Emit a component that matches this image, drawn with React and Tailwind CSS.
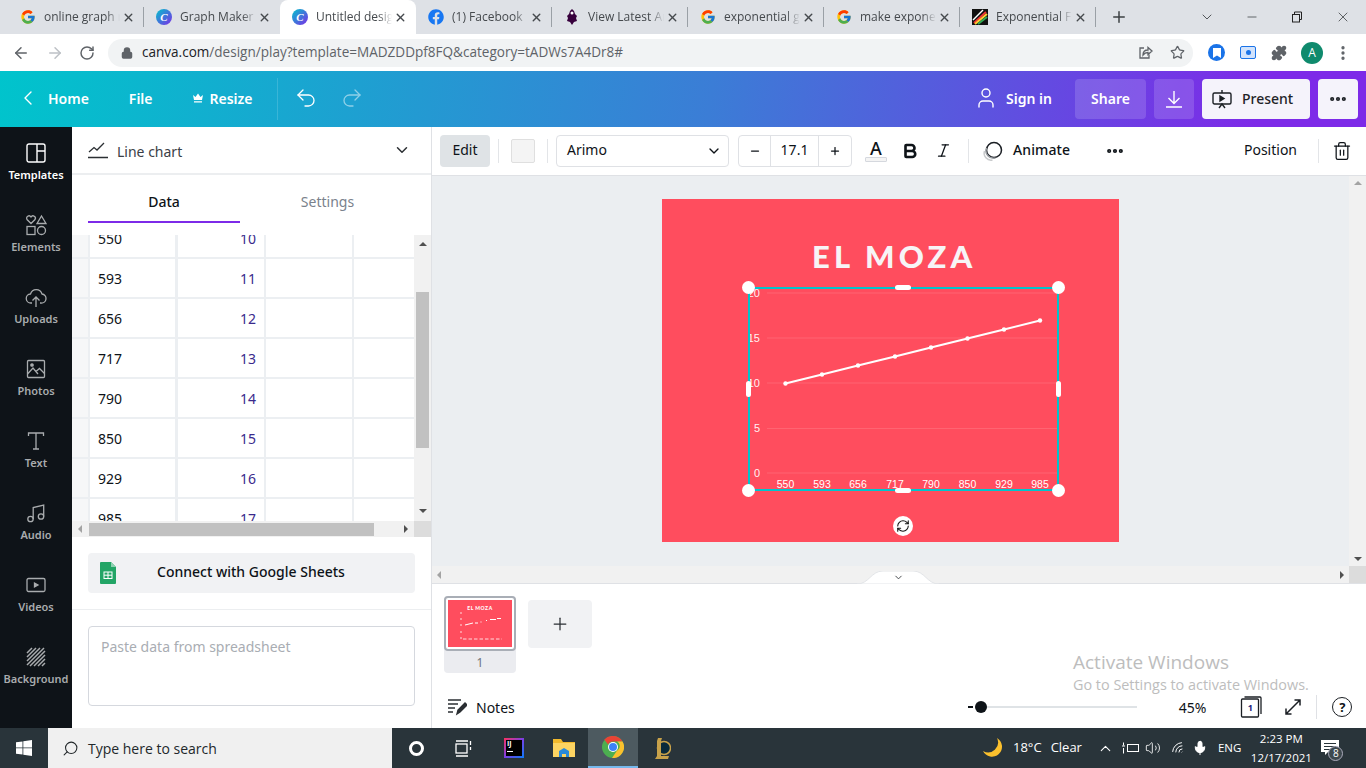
import React from "react";
import { FcGoogle } from "react-icons/fc";
import { FaFacebook } from "react-icons/fa";
import {
  X, Plus, ArrowLeft, ArrowRight, RotateCw, Lock, Star, Puzzle, ChevronDown, ChevronLeft, Minus, Undo2, Redo2,
  User, EllipsisVertical, Ellipsis, Trash2, Bold, Italic, Search, ChevronUp, Mic, Volume2, Wifi, RefreshCw,
} from "lucide-react";

const CanvaIcon = () => (
  <span className="w-4 h-4 rounded-full bg-[linear-gradient(135deg,#00c4cc,#7d2ae8)] flex items-center justify-center text-white text-[11px] italic font-bold leading-none font-['Liberation_Serif',serif]">C</span>
);
const PLIcon = () => (
  <svg width="16" height="16" viewBox="0 0 16 16"><path d="M8 0l2 2 1 3 2 2-1 2 1 3-3 1-2 3-2-3-3-1 1-3-1-2 2-2 1-3z" fill="#37003c" /><circle cx="8" cy="4" r="1.5" fill="#fff" /></svg>
);
const RainbowIcon = () => (
  <svg width="16" height="16" viewBox="0 0 16 16"><rect width="16" height="16" fill="#111" /><path d="M2 14L14 3" stroke="#e33" strokeWidth="2" /><path d="M3 15L15 5" stroke="#fc3" strokeWidth="2" /><path d="M6 15L15 8" stroke="#3a5" strokeWidth="2" /><path d="M1 11L11 1" stroke="#fff" strokeWidth="1.5" /></svg>
);

const tabs = [
  { t: "online graph maker", i: <FcGoogle size={16} /> },
  { t: "Graph Maker - Create", i: <CanvaIcon /> },
  { t: "Untitled design - Line", i: <CanvaIcon />, active: true },
  { t: "(1) Facebook", i: <FaFacebook size={16} className="text-[#1877f2]" /> },
  { t: "View Latest Arsenal", i: <PLIcon /> },
  { t: "exponential graph", i: <FcGoogle size={16} /> },
  { t: "make exponential", i: <FcGoogle size={16} /> },
  { t: "Exponential Function", i: <RainbowIcon /> },
];

function Tab({ t, i, active, sep }) {
  return (
    <div className={`w-[136px] h-[34px] shrink-0 flex items-center pl-[12px] ${active ? "bg-white rounded-t-[8px]" : ""}`}>
      <span className="w-4 h-4 shrink-0 flex items-center justify-center">{i}</span>
      <span className="ml-[8px] w-[76px] overflow-hidden whitespace-nowrap text-[12px] text-[#45494d] [mask-image:linear-gradient(90deg,#000_82%,transparent)]">{t}</span>
      <X size={13} strokeWidth={2.6} className="ml-auto mr-[8px] text-[#45494d]" />
      <span className={`w-px h-[20px] ${sep ? "bg-[#9aa0a6]" : ""}`} />
    </div>
  );
}

function ChromeTop() {
  return (
    <>
      <div className="h-[34px] bg-[#dee1e6] flex items-end pl-[8px] font-['Open_Sans',sans-serif]">
        {tabs.map((x, k) => <Tab key={k} {...x} sep={k !== 1 && k !== 2} />)}
        <Plus size={18} strokeWidth={2} className="ml-[14px] mb-[8px] text-[#3c4043]" />
        <div className="ml-auto self-stretch flex items-center text-[#3c4043]">
          <ChevronDown size={16} strokeWidth={1.3} className="mr-[30px]" />
          <Minus size={14} strokeWidth={1.3} className="mr-[32px]" />
          <svg width="12" height="12" viewBox="0 0 12 12" fill="none" stroke="#222" className="mr-[32px]"><rect x="1.5" y="3.5" width="7" height="7.5" /><path d="M3.5 3.5V1h7v7.5H8.5" /></svg>
          <X size={16} strokeWidth={1.2} className="mr-[15px]" />
        </div>
      </div>
      <div className="h-[37px] bg-white flex items-center pl-[12px] font-['Open_Sans',sans-serif]">
        <ArrowLeft size={18} strokeWidth={2} className="text-[#5f6368]" />
        <ArrowRight size={18} strokeWidth={2} className="ml-[16px] text-[#bdc1c6]" />
        <RotateCw size={16} strokeWidth={2.2} className="ml-[15px] text-[#5f6368]" />
        <div className="ml-[13px] w-[1085px] h-[28px] rounded-full bg-[#f1f3f4] flex items-center pl-[13px] pr-[8px]">
          <Lock size={12} strokeWidth={3} fill="#5f6368" className="text-[#5f6368]" />
          <span className="ml-[9px] text-[13.55px] whitespace-nowrap text-[#5f6368]"><span className="text-[#202124]">canva.com</span>/design/play?template=MADZDDpf8FQ&amp;category=tADWs7A4Dr8#</span>
          <svg width="16" height="16" viewBox="0 0 16 16" fill="none" stroke="#5f6368" strokeWidth="1.3" className="ml-auto"><path d="M7 3H3v10h9V9.5" /><path d="M6 10c0-3.5 2.5-5 5-5V2.500L15 6l-4 3.500V7.500C9 7.500 7.500 8 6 10z" /></svg>
          <Star size={15} strokeWidth={2} className="ml-[17px] text-[#5f6368]" />
        </div>
        <div className="ml-[15px] w-[17px] h-[17px] rounded-full bg-[#1a73e8] flex items-center justify-center">
          <svg width="8" height="10" viewBox="0 0 8 10"><path d="M0 0h8v10L4 7.500 0 10z" fill="#fff" /></svg>
        </div>
        <div className="ml-[15px] w-[16px] h-[13px] rounded-[2px] bg-[#d2e3fc] border border-[#1a73e8] flex items-center justify-center">
          <span className="w-[5px] h-[5px] rounded-full bg-[#1a73e8]" />
        </div>
        <Puzzle size={16} fill="#5f6368" className="ml-[15px] text-[#5f6368]" />
        <div className="ml-[14px] w-[22px] h-[22px] rounded-full bg-[#0f8a6d] text-white text-[12px] flex items-center justify-center">A</div>
        <EllipsisVertical size={18} strokeWidth={2.4} className="ml-[11px] text-[#5f6368]" />
      </div>
    </>
  );
}

function CanvaHeader() {
  return (
    <div className="h-[56px] flex items-center text-white text-[14px] font-semibold bg-[linear-gradient(98deg,#00c4cc,#3b7dd6_52%,#7d2ae8_92%)]">
      <ChevronLeft size={24} strokeWidth={1.4} className="ml-[16px] mb-[2px]" />
      <span className="ml-[8px] pb-[2px]">Home</span>
      <span className="ml-[40px] pb-[2px]">File</span>
      <svg width="12" height="12" viewBox="0 0 12 12" fill="#fff" className="ml-[39px] mb-[2px]"><path d="M1 3l2.500 2L6 1.500 8.500 5 11 3l-1 5H2zM2 9.300h8v1.200H2z" /></svg>
      <span className="ml-[6px] pb-[2px]">Resize</span>
      <div className="ml-[24px] w-px h-[42px] bg-white/15" />
      <Undo2 size={24} strokeWidth={1.300} className="ml-[16px] mb-[2px]" />
      <Redo2 size={24} strokeWidth={1.300} className="ml-[22px] mb-[2px] opacity-50" />
      <User size={24} strokeWidth={1.400} className="ml-auto mb-[2px]" />
      <span className="ml-[8px] pb-[2px]">Sign in</span>
      <div className="ml-[23px] pb-[2px] w-[71px] h-[40px] rounded-[4px] bg-white/15 flex items-center justify-center">Share</div>
      <div className="ml-[8px] w-[40px] h-[40px] rounded-[4px] bg-white/15 flex items-center justify-center">
        <svg width="20" height="20" viewBox="0 0 20 20" fill="none" stroke="#fff" strokeWidth="1.400"><path d="M10 2v12M4.500 9l5.500 5.500L15.500 9M2 18h16" /></svg>
      </div>
      <div className="ml-[8px] w-[108px] h-[40px] rounded-[4px] bg-[#f5f3fb] text-[#1f2328] font-medium flex items-center pl-[10px]">
        <svg width="20" height="20" viewBox="0 0 20 20" fill="none" stroke="#1b1f24" strokeWidth="1.400"><rect x="1" y="4" width="18" height="11" rx="1.500" /><path d="M10 1v3M7 19l3-4 3 4" /><path d="M8 7l4 2.500-4 2.500z" fill="#1b1f24" /></svg>
        <span className="ml-[10px] pb-[2px]">Present</span>
      </div>
      <div className="ml-[8px] mr-[8px] w-[40px] h-[40px] rounded-[4px] bg-[#f5f3fb] flex items-center justify-center">
        <Ellipsis size={20} strokeWidth={3} className="text-[#1b1f24]" />
      </div>
    </div>
  );
}

const side = [
  ["Templates", <svg width="20" height="20" viewBox="0 0 20 20" fill="none" stroke="currentColor" strokeWidth="1.400"><rect x="1" y="1" width="18" height="18" rx="2" /><path d="M11 1v18M11 8h8" /></svg>],
  ["Elements", <svg width="22" height="22" viewBox="0 0 22 22" fill="none" stroke="currentColor" strokeWidth="1.300"><path d="M6 9.500L2 5.500a2.300 2.300 0 014-2.500 2.300 2.300 0 014 2.500z" /><path d="M16.500 2L21 9.500h-9z" /><rect x="2" y="12.500" width="8" height="8" /><circle cx="16.500" cy="16.500" r="4" /></svg>],
  ["Uploads", <svg width="22" height="22" viewBox="0 0 22 22" fill="none" stroke="currentColor" strokeWidth="1.300"><path d="M7 17H6a4.500 4.500 0 01-.5-9 6 6 0 0111.500 0 4.500 4.500 0 01-1 9h-1" /><path d="M11 21V11M7.500 14.500L11 11l3.500 3.500" /></svg>],
  ["Photos", <svg width="20" height="20" viewBox="0 0 20 20" fill="none" stroke="currentColor" strokeWidth="1.300"><rect x="1.500" y="1.500" width="17" height="17" rx="1" /><circle cx="6" cy="6" r="1.200" fill="currentColor" /><path d="M1.500 15l5.500-6 5 6M10 12.500l3.500-3 5 5" /></svg>],
  ["Text", <svg width="20" height="20" viewBox="0 0 20 20" fill="none" stroke="currentColor" strokeWidth="1.300"><path d="M2.500 5V2h15v3M10 2v16M7 18h6" /></svg>],
  ["Audio", <svg width="20" height="20" viewBox="0 0 20 20" fill="none" stroke="currentColor" strokeWidth="1.300"><circle cx="4.500" cy="16" r="2.700" /><circle cx="15" cy="13.500" r="2.700" /><path d="M7.200 16V4.500L17.700 2v11.500" /></svg>],
  ["Videos", <svg width="20" height="20" viewBox="0 0 20 20" fill="none" stroke="currentColor" strokeWidth="1.300"><rect x="1" y="3.500" width="18" height="13" rx="1.500" /><path d="M8.500 8l3.500 2-3.500 2z" fill="currentColor" /></svg>],
  ["Background", <svg width="20" height="20" viewBox="0 0 20 20" fill="none" stroke="currentColor" strokeWidth="1.500"><path d="M1 6l5-5M1 10l9-9M1 14L14 1M1 18L18 1M4 19L19 4M8 19L19 8M12 19l7-7M16 19l3-3" /></svg>],
];

function Sidebar() {
  return (
    <div className="w-[72px] shrink-0 bg-[#0e1318] flex flex-col">
      {side.map(([l, ic], k) => (
        <div key={l} className={`h-[72px] flex flex-col items-center pt-[15px] text-[11px] font-semibold leading-[14px] ${k === 0 ? "text-white" : "text-[#a9acae]"}`}>
          <span className="h-[22px] flex items-center justify-center">{ic}</span>
          <span className="mt-[4px]">{l}</span>
        </div>
      ))}
    </div>
  );
}

const rows = [[550, 10], [593, 11], [656, 12], [717, 13], [790, 14], [850, 15], [929, 16], [985, 17]];

function Panel() {
  return (
    <div className="w-[360px] shrink-0 bg-white border-r border-[#dfe1e5] flex flex-col text-[14px] text-[#0e1318]">
      <div className="h-[48px] border-b-2 border-[#eceef0] flex items-center pl-[16px] pr-[20px]">
        <svg width="20" height="18" viewBox="0 0 20 18" fill="none" stroke="#2b2f33" strokeWidth="1.300"><path d="M1 11l5-4.500 3 2.500 7-7M0 16.500h20" /></svg>
        <span className="ml-[9px] pt-[2px] text-[#3b4046]">Line chart</span>
        <ChevronDown size={18} strokeWidth={2} className="ml-auto text-[#2b2f33]" />
      </div>
      <div className="h-[48px] mx-[16px] flex">
        <div className="w-[152px] border-b-2 border-[#7d2ae8] font-medium flex items-center justify-center pt-[6px]">Data</div>
        <div className="flex-1 text-[#7a828c] flex items-center justify-center pt-[5px]">Settings</div>
      </div>
      <div className="mt-[12px] h-[286px] flex">
        <div className="w-[342px] overflow-hidden bg-[#eceff2]">
          <div className="mt-[-16px] flex flex-col">
            {rows.map(([a, b]) => (
              <div key={a} className="h-[40px] shrink-0 pb-[2px] flex gap-[2px]">
                <div className="w-[16px] bg-[#f6f7f8]" />
                <div className="w-[85px] bg-white flex items-center pl-[8px]">{a}</div>
                <div className="ml-[1px] w-[86px] bg-white flex items-center justify-end pr-[8px] text-[#3a2a8c]">{b}</div>
                <div className="w-[86px] bg-white" />
                <div className="w-[60px] bg-white" />
              </div>
            ))}
          </div>
        </div>
        <div className="w-[17px] bg-[#f1f1f1] flex flex-col items-center">
          <div className="mt-[7px] w-0 h-0 border-x-[4px] border-x-transparent border-b-[4px] border-b-[#505050]" />
          <div className="mt-[46px] w-[13px] h-[156px] bg-[#c1c1c1]" />
          <div className="mt-auto mb-[8px] w-0 h-0 border-x-[4px] border-x-transparent border-t-[4px] border-t-[#505050]" />
        </div>
      </div>
      <div className="h-[16px] flex">
        <div className="w-[342px] bg-[#f1f1f1] flex items-center">
          <div className="ml-[6px] w-0 h-0 border-y-[4px] border-y-transparent border-r-[4px] border-r-[#a3a3a3]" />
          <div className="ml-[7px] w-[285px] h-[13px] bg-[#c1c1c1]" />
          <div className="ml-auto mr-[6px] w-0 h-0 border-y-[4px] border-y-transparent border-l-[4px] border-l-[#505050]" />
        </div>
        <div className="w-[17px] bg-[#dcdcdc]" />
      </div>
      <div className="pt-[16px] pb-[16px] px-[16px] border-b border-[#eceef0]">
        <div className="h-[40px] w-[327px] rounded-[4px] bg-[#f1f2f4] flex items-center pl-[12px]">
          <svg width="16" height="22" viewBox="0 0 16 22"><path d="M1 0h10l5 5v16a1 1 0 01-1 1H1a1 1 0 01-1-1V1a1 1 0 011-1z" fill="#23a566" /><path d="M11 0l5 5h-5z" fill="#8ed1b1" /><rect x="4" y="10" width="8" height="6.500" fill="none" stroke="#fff" strokeWidth="1" /><path d="M4 13.200h8M8 10v6.500" stroke="#fff" strokeWidth="1" /></svg>
          <span className="ml-[41px] pb-[3px] font-medium whitespace-nowrap">Connect with Google Sheets</span>
        </div>
      </div>
      <div className="pt-[16px] px-[16px]">
        <div className="w-[327px] h-[80px] rounded-[4px] border border-[#d5d8de] px-[12px] pt-[9px] text-[#a9adb3]">Paste data from spreadsheet</div>
      </div>
    </div>
  );
}

const Sep = ({ c }) => <div className={`w-px h-[24px] bg-[#e3e5e8] ${c}`} />;

function Toolbar() {
  return (
    <div className="h-[49px] shrink-0 border-b border-[#dfe1e5] bg-white flex items-center pl-[8px] text-[14px] text-[#0e1318] pb-[1px]">
      <div className="w-[50px] h-[32px] pb-[2px] rounded-[4px] bg-[#dfe3e6] flex items-center justify-center">Edit</div>
      <Sep c="ml-[8px]" />
      <div className="ml-[12px] w-[24px] h-[24px] rounded-[2px] bg-[#f4f4f4] border border-[#dfdfdf]" />
      <Sep c="ml-[12px]" />
      <div className="ml-[8px] w-[173px] h-[32px] rounded-[4px] border border-[#dfe1e5] flex items-center pl-[10px] pr-[6px]">
        <span className="pb-[2px]">Arimo</span>
        <ChevronDown size={16} strokeWidth={2} className="ml-auto" />
      </div>
      <div className="ml-[9px] w-[114px] h-[32px] rounded-[4px] border border-[#dfe1e5] flex items-center">
        <div className="w-[31px] flex justify-center"><Minus size={12} strokeWidth={2.500} /></div>
        <div className="w-[49px] h-full pb-[2px] border-x border-[#dfe1e5] flex items-center justify-center">17.1</div>
        <div className="flex-1 flex justify-center"><Plus size={12} strokeWidth={2.500} /></div>
      </div>
      <div className="ml-[13px] w-[22px] flex flex-col items-center">
        <span className="text-[18px] leading-[17px] font-medium">A</span>
        <span className="w-[22px] h-[5px] rounded-[1px] bg-[#f4f4f4] border border-[#d5d8de]" />
      </div>
      <Bold size={18} strokeWidth={3.500} className="ml-[14px]" />
      <Italic size={17} strokeWidth={1.800} className="ml-[16px]" />
      <Sep c="ml-[16px]" />
      <svg width="22" height="22" viewBox="0 0 22 22" fill="none" stroke="#1b1f24" strokeWidth="1.500" className="ml-[13px]"><circle cx="12" cy="10" r="7.500" /><path d="M4.500 8a7.500 7.500 0 009 10" stroke="#9ca0a5" /><path d="M2.500 11a7 7 0 008 9" stroke="#c8cacc" /></svg>
      <span className="ml-[9px] pb-[2px] font-medium tracking-[0.1px]">Animate</span>
      <Ellipsis size={20} strokeWidth={3} className="ml-[35px]" />
      <span className="ml-auto pb-[2px]">Position</span>
      <Sep c="ml-[21px]" />
      <Trash2 size={20} strokeWidth={1.500} className="ml-[13px] mr-[14px]" />
    </div>
  );
}

const labels = [
  [37.5, 550], [74, 593], [110, 656], [147, 717], [183, 790], [219.5, 850], [256, 929], [292, 985],
];
const ys = [96.5, 87.5, 78.5, 69.5, 60.5, 51.5, 42.5, 33.5];
const ticks = [[6, 20], [51, 15], [96, 10], [141.5, 5], [186, 0]];

function Chart() {
  return (
    <svg width="311" height="204" viewBox="0 0 311 204" className="font-['Liberation_Sans',sans-serif]">
      {ticks.map(([y]) => <line key={y} x1="19" x2="309" y1={y} y2={y} stroke="#fff" strokeOpacity="0.13" />)}
      {ticks.map(([y, v]) => <text key={v} x="12" y={y + 3.5} textAnchor="end" fontSize="11" fill="#fff" fillOpacity="0.95">{v}</text>)}
      {labels.map(([x, v]) => <text key={v} x={x} y="201" textAnchor="middle" fontSize="10.500" fill="#fff">{v}</text>)}
      <polyline points={labels.map(([x], i) => `${x},${ys[i]}`).join(" ")} fill="none" stroke="#fff" strokeWidth="2" />
      {labels.map(([x], i) => <circle key={x} cx={x} cy={ys[i]} r="2.200" fill="#fff" />)}
    </svg>
  );
}

const Dot = ({ c }) => <span className={`absolute w-[13px] h-[13px] rounded-full bg-white ${c}`} />;
const Pill = ({ c }) => <span className={`absolute rounded-full bg-white ${c}`} />;

function Design() {
  return (
    <div className="relative w-[457px] h-[343px] bg-[#ff4d5e]">
      <div className="pt-[39px] pl-[150px] text-[31px] leading-[36px] font-black tracking-[4.2px] text-[#f7f4f6] whitespace-nowrap font-['Lato',sans-serif]">EL MOZA</div>
      <div className="absolute left-[86px] top-[88px] w-[311px] h-[204px]">
        <Chart />
        <div className="absolute inset-0 border-2 border-[#00c4cc]" />
        <Dot c="-left-[6px] -top-[6px]" />
        <Dot c="-right-[6px] -top-[6px]" />
        <Dot c="-left-[6px] -bottom-[6px]" />
        <Dot c="-right-[6px] -bottom-[6px]" />
        <Pill c="left-[147px] -top-[2px] w-[16px] h-[5px]" />
        <Pill c="left-[147px] -bottom-[2px] w-[16px] h-[5px]" />
        <Pill c="-left-[2px] top-[94px] w-[5px] h-[16px]" />
        <Pill c="-right-[2px] top-[94px] w-[5px] h-[16px]" />
      </div>
      <div className="absolute left-[231px] top-[317px] w-[20px] h-[20px] rounded-full bg-white flex items-center justify-center">
        <RefreshCw size={14} strokeWidth={1.800} className="text-[#111]" />
      </div>
    </div>
  );
}

function Thumb() {
  return (
    <div className="w-[72px] h-[77px] rounded-[4px] bg-[#ebecf0] flex flex-col items-center">
      <div className="w-[72px] h-[55px] rounded-[4px] border-[2px] border-[#a9aeb6] p-[2px] bg-white">
        <div className="w-full h-full bg-[#ff4d5e] flex flex-col items-center">
          <span className="mt-[5px] text-[5px] leading-[6px] font-black tracking-[0.5px] text-white font-['Lato',sans-serif]">EL MOZA</span>
          <svg width="64" height="34" viewBox="0 0 64 34" fill="none" stroke="#fff">
            <path d="M17 14l8-2M27 12h3M33 10.500v1M38 9.500h1M42 8.500h6M49 7.500h4" strokeWidth="1" />
            <path d="M12 2h2M12 8h2M12 14h2M12 21h2M12 27h2" strokeWidth="0.800" />
            <path d="M15 28h39" strokeWidth="0.800" strokeDasharray="3.500 2" />
          </svg>
        </div>
      </div>
      <span className="mt-[3px] text-[12px] text-[#6f757d]">1</span>
    </div>
  );
}

function Workspace() {
  return (
    <div className="flex-1 min-w-0 flex flex-col relative">
      <Toolbar />
      <div className="h-[390px] shrink-0 flex">
        <div className="flex-1 bg-[#ebeef1] flex justify-center pt-[23px]"><Design /></div>
        <div className="w-[17px] bg-[#f1f1f1] flex flex-col items-center">
          <div className="mt-[5px] w-0 h-0 border-x-[4px] border-x-transparent border-b-[4px] border-b-[#a3a3a3]" />
          <div className="mt-auto mb-[5px] w-0 h-0 border-x-[4px] border-x-transparent border-t-[4px] border-t-[#505050]" />
        </div>
      </div>
      <div className="h-[18px] shrink-0 flex border-b border-[#dfe1e5] relative">
        <div className="flex-1 bg-[#f1f1f1] flex items-center">
          <div className="ml-[5px] w-0 h-0 border-y-[4px] border-y-transparent border-r-[4px] border-r-[#a3a3a3]" />
          <div className="ml-auto mr-[5px] w-0 h-0 border-y-[4px] border-y-transparent border-l-[4px] border-l-[#505050]" />
        </div>
        <div className="w-[17px] bg-[#dcdcdc]" />
        <svg width="82" height="13" viewBox="0 0 82 13" className="absolute left-[425px] top-[5px]"><path d="M0 13c12 0 14-13 26-13h30c12 0 14 13 26 13z" fill="#fff" stroke="#e3e5e8" /></svg>
        <ChevronDown size={11} strokeWidth={2} className="absolute left-[461px] top-[6px] text-[#3c4043]" />
      </div>
      <div className="flex-1 bg-white flex flex-col">
        <div className="flex pl-[12px] pt-[12px] gap-[12px]">
          <Thumb />
          <div className="mt-[4px] w-[64px] h-[48px] rounded-[4px] bg-[#f1f2f4] flex items-center justify-center">
            <Plus size={20} strokeWidth={1.500} className="text-[#2b2f33]" />
          </div>
        </div>
        <div className="mt-[22px] h-[24px] flex items-center pl-[15px] text-[14px] text-[#0e1318]">
          <svg width="20" height="18" viewBox="0 0 20 18" fill="none" stroke="#2b2f33" strokeWidth="1.400"><path d="M1 2h13M1 6h10M1 10h7M1 14h5" /><path d="M10 16l1-4 7-7 2 2-7 7z" fill="#2b2f33" /></svg>
          <span className="ml-[9px]">Notes</span>
          <span className="ml-[453px] w-[5px] h-[2px] bg-[#0e1318]" />
          <span className="ml-[2px] w-[12px] h-[12px] rounded-full bg-[#0e1318]" />
          <span className="w-[150px] h-[2px] bg-[#dfe3e6]" />
          <span className="ml-[42px]">45%</span>
          <div className="relative ml-[34px] w-[24px] h-[22px]">
            <svg width="24" height="22" viewBox="0 0 24 22" fill="none" stroke="#1b1f24" strokeWidth="1.300"><rect x="1.500" y="3" width="17" height="18" rx="1" /><path d="M4.500 1H20a1 1 0 011 1v16" /></svg>
            <span className="absolute left-[1px] top-[3px] w-[18px] text-center text-[9px] leading-[18px] font-bold text-[#1a237e]">1</span>
          </div>
          <svg width="18" height="18" viewBox="0 0 18 18" fill="none" stroke="#1b1f24" strokeWidth="1.500" className="ml-[20px]"><path d="M2 16L16 2M10.500 2H16v5.500M7.500 16H2v-5.500" /></svg>
          <span className="ml-[14px] w-px h-[24px] bg-[#dfe1e5]" />
          <span className="ml-[15px] w-[20px] h-[20px] rounded-full border-[1.500px] border-[#1b1f24] flex items-center justify-center text-[13px] font-bold leading-none">?</span>
        </div>
      </div>
      <div className="absolute left-[641px] top-[523px] font-['Open_Sans',sans-serif] text-[#bdbdbd] pointer-events-none whitespace-nowrap">
        <div className="text-[19px] leading-[24px]">Activate Windows</div>
        <div className="text-[14.400px] leading-[22px]">Go to Settings to activate Windows.</div>
      </div>
    </div>
  );
}

function Taskbar() {
  return (
    <div className="h-[40px] shrink-0 bg-[#29343a] flex items-center text-white font-['Open_Sans',sans-serif]">
      <div className="w-[48px] flex justify-center">
        <svg width="16" height="16" viewBox="0 0 16 16" fill="#fff"><path d="M0 2.300L6.500 1.400V7.500H0zM7.300 1.300L16 0v7.500H7.300zM0 8.300h6.500v6.300L0 13.700zM7.300 8.300H16V16l-8.700-1.300z" /></svg>
      </div>
      <div className="w-[344px] h-full bg-[#f0f0f0] flex items-center pl-[14px] text-[#22282b]">
        <Search size={17} strokeWidth={1.500} className="-scale-x-100" />
        <span className="ml-[9px] text-[14px]">Type here to search</span>
      </div>
      <span className="ml-[17px] w-[15px] h-[15px] rounded-full border-[3px] border-white" />
      <svg width="17" height="17" viewBox="0 0 17 17" fill="none" stroke="#fff" strokeWidth="1.300" className="ml-[31px]"><path d="M1 1h12M1 16h12" /><rect x="1" y="4" width="11" height="9" /><path d="M15.500 1v4M15.500 7v3" /></svg>
      <div className="ml-[32px] w-[20px] h-[20px] bg-[linear-gradient(135deg,#fe315d,#7b3fe4,#087cfa)] p-[2px]">
        <div className="w-full h-full bg-black text-white text-[7px] font-bold leading-[8px] pl-[1px]">IJ<div className="mt-[3px] w-[6px] h-px bg-white" /></div>
      </div>
      <svg width="22" height="20" viewBox="0 0 22 20" className="ml-[29px]"><path d="M0 1h8l2 3h12v2H0z" fill="#f2b92c" /><path d="M0 5h22v14H0z" fill="#fcd462" /><path d="M6 19v-6l5-3 5 3v6h-3v-3H9v3z" fill="#2b8ad8" /></svg>
      <div className="ml-[13px] w-[50px] h-full bg-[#4d5a60] border-b-2 border-[#76b9ed] flex items-center justify-center">
        <svg width="22" height="22" viewBox="0 0 22 22"><circle cx="11" cy="11" r="11" fill="#4caf50" /><path d="M11 0a11 11 0 019.500 5.500H11a5.500 5.500 0 00-5 3L2.300 3.500A11 11 0 0111 0z" fill="#ea4335" /><path d="M20.500 5.500A11 11 0 0110 22l4.700-7a5.500 5.500 0 00.500-9.500z" fill="#fbc02d" /><circle cx="11" cy="11" r="5" fill="#fff" /><circle cx="11" cy="11" r="4" fill="#3b82f6" /></svg>
      </div>
      <svg width="18" height="24" viewBox="0 0 18 24" fill="none" className="ml-[15px]"><circle cx="11" cy="12" r="6.500" stroke="#c8a24a" strokeWidth="1.500" fill="#0a2a3a" /><path d="M5 2h4L8 5v15h8l-1 3H2l2-3V5z" fill="#c8a24a" /></svg>
      <svg width="22" height="22" viewBox="0 0 22 22" className="ml-[311px]"><path d="M15 1a10 10 0 11-14 13A10 10 0 0015 1z" fill="#fbc02d" /></svg>
      <span className="ml-[9px] text-[13px]">18°C</span>
      <span className="ml-[9px] text-[13px]">Clear</span>
      <ChevronUp size={17} strokeWidth={1.500} className="ml-[15px]" />
      <svg width="17" height="14" viewBox="0 0 17 14" fill="none" stroke="#fff" strokeWidth="1" className="ml-[8px]"><rect x="5.500" y="3.500" width="11" height="7" /><path d="M0 5h3M1.500 1.500v3M1.500 7v5.500" /></svg>
      <Volume2 size={16} strokeWidth={1.300} className="ml-[6px]" />
      <Wifi size={15} strokeWidth={1.500} className="ml-[10px] -rotate-45" />
      <Mic size={16} strokeWidth={1.500} fill="#fff" className="ml-[6px]" />
      <span className="ml-[10px] text-[11.500px]">ENG</span>
      <div className="ml-[11px] w-[58px] text-center text-[11.500px] leading-[19px] whitespace-nowrap flex flex-col items-center">
        <span>2:23 PM</span>
        <span>12/17/2021</span>
      </div>
      <div className="relative ml-[11px]">
        <svg width="18" height="16" viewBox="0 0 18 16" fill="#fff"><path d="M0 0h18v12H7l-3 3v-3H0z" /><path d="M3 3.500h12M3 6.500h12M3 9.500h8" stroke="#29343a" /></svg>
        <span className="absolute left-[7px] top-[6px] w-[15px] h-[15px] rounded-full bg-[#3d484e] border border-[#aab] text-[10px] leading-[13px] text-center">8</span>
      </div>
    </div>
  );
}

export default function App() {
  return (
    <div className="w-[1366px] h-[768px] overflow-hidden flex flex-col font-['Noto_Sans',sans-serif]">
      <ChromeTop />
      <CanvaHeader />
      <div className="flex-1 min-h-0 flex">
        <Sidebar />
        <Panel />
        <Workspace />
      </div>
      <Taskbar />
    </div>
  );
}
